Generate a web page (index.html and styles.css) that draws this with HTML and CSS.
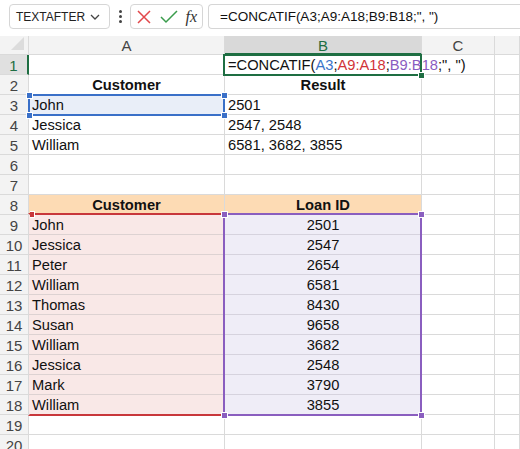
FILE: index.html
```html
<!DOCTYPE html>
<html lang="en">
<head>
  <meta charset="UTF-8">
  <title>CONCATIF</title>
  <link rel="stylesheet" href="styles.css">
</head>
<body>
  <!-- formula bar -->
  <div class="toolbar">
    <div class="name-box">
      <span>TEXTAFTER</span>
      <svg class="chev" width="12" height="8" viewBox="0 0 12 8"><path d="M2 2 L6 6 L10 2" fill="none" stroke="#444" stroke-width="1.3"/></svg>
    </div>
    <div class="dots"><i></i><i></i><i></i></div>
    <div class="fx-box">
      <svg width="16" height="16" viewBox="0 0 16 16"><path d="M2 2 L14 14 M14 2 L2 14" stroke="#e2484b" stroke-width="1.5" fill="none"/></svg>
      <svg width="18" height="16" viewBox="0 0 18 16"><path d="M1 8 L6 13 L17 2" stroke="#3a9c4c" stroke-width="1.5" fill="none"/></svg>
      <span class="fx">fx</span>
    </div>
    <div class="formula">=CONCATIF(A3;A9:A18;B9:B18;", ")</div>
  </div>

  <!-- sheet -->
  <div class="sheet">
    <div class="corner"></div>
    <div class="col-head">A</div>
    <div class="col-head sel">B</div>
    <div class="col-head">C</div>
    <div class="col-head"></div>

    <div class="row-head sel">1</div>
    <div class="cell"></div>
    <div class="cell formula-cell">=CONCATIF(<span class="r-blue">A3</span>;<span class="r-red">A9:A18</span>;<span class="r-purple">B9:B18</span>;", ")</div>
    <div class="cell"></div><div class="cell"></div>

    <div class="row-head">2</div>
    <div class="cell head">Customer</div>
    <div class="cell head">Result</div>
    <div class="cell"></div><div class="cell"></div>

    <div class="row-head">3</div>
    <div class="cell picked">John</div>
    <div class="cell">2501</div>
    <div class="cell"></div><div class="cell"></div>

    <div class="row-head">4</div>
    <div class="cell">Jessica</div>
    <div class="cell">2547, 2548</div>
    <div class="cell"></div><div class="cell"></div>

    <div class="row-head">5</div>
    <div class="cell">William</div>
    <div class="cell">6581, 3682, 3855</div>
    <div class="cell"></div><div class="cell"></div>

    <div class="row-head">6</div>
    <div class="cell"></div><div class="cell"></div><div class="cell"></div><div class="cell"></div>

    <div class="row-head">7</div>
    <div class="cell"></div><div class="cell"></div><div class="cell"></div><div class="cell"></div>

    <div class="row-head">8</div>
    <div class="cell head peach">Customer</div>
    <div class="cell head peach">Loan ID</div>
    <div class="cell"></div><div class="cell"></div>

    <div class="row-head">9</div><div class="cell pink">John</div><div class="cell lav">2501</div><div class="cell"></div><div class="cell"></div>
    <div class="row-head">10</div><div class="cell pink">Jessica</div><div class="cell lav">2547</div><div class="cell"></div><div class="cell"></div>
    <div class="row-head">11</div><div class="cell pink">Peter</div><div class="cell lav">2654</div><div class="cell"></div><div class="cell"></div>
    <div class="row-head">12</div><div class="cell pink">William</div><div class="cell lav">6581</div><div class="cell"></div><div class="cell"></div>
    <div class="row-head">13</div><div class="cell pink">Thomas</div><div class="cell lav">8430</div><div class="cell"></div><div class="cell"></div>
    <div class="row-head">14</div><div class="cell pink">Susan</div><div class="cell lav">9658</div><div class="cell"></div><div class="cell"></div>
    <div class="row-head">15</div><div class="cell pink">William</div><div class="cell lav">3682</div><div class="cell"></div><div class="cell"></div>
    <div class="row-head">16</div><div class="cell pink">Jessica</div><div class="cell lav">2548</div><div class="cell"></div><div class="cell"></div>
    <div class="row-head">17</div><div class="cell pink">Mark</div><div class="cell lav">3790</div><div class="cell"></div><div class="cell"></div>
    <div class="row-head">18</div><div class="cell pink">William</div><div class="cell lav">3855</div><div class="cell"></div><div class="cell"></div>

    <div class="row-head">19</div>
    <div class="cell"></div><div class="cell"></div><div class="cell"></div><div class="cell"></div>
    <div class="row-head">20</div>
    <div class="cell"></div><div class="cell"></div><div class="cell"></div><div class="cell"></div>

    <!-- range outlines -->
    <div class="range range-blue"><i class="h tl"></i><i class="h tr"></i><i class="h bl"></i><i class="h br"></i></div>
    <div class="range range-red"><i class="h tl"></i></div>
    <div class="range range-purple"><i class="h tl"></i><i class="h tr"></i><i class="h bl"></i><i class="h br"></i></div>
    <div class="active"><i class="fill-handle"></i></div>
  </div>
</body>
</html>
```

FILE: styles.css
```css
* {margin:0; padding:0; box-sizing:border-box;}
body {
  width:520px; height:449px; overflow:hidden; background:#fff;
  font-family:"Liberation Sans", Arial, sans-serif; color:#111;
}

/* formula bar */
.toolbar {
  height:36px; display:flex; align-items:flex-start; padding:4px 0 0 9px;
}
.name-box {
  width:101px; height:25px; border:1px solid #d6d6d6; border-radius:4px;
  display:flex; align-items:center; justify-content:space-between; padding:0 8px 0 6px;
  font-size:12px; color:#222;
}
.dots {
  width:20px; height:25px; display:flex; flex-direction:column; align-items:center; justify-content:center; gap:2px;
}
.dots i {width:3px; height:3px; background:#444; border-radius:50%; display:block;}
.fx-box {
  width:73px; height:25px; border:1px solid #d6d6d6; border-radius:4px;
  display:flex; align-items:center; justify-content:space-between; padding:0 5px 0 5px;
}
.fx {font-family:"Liberation Serif", serif; font-style:italic; font-size:16px; color:#333;}
.formula {
  margin-left:5px; flex:1; height:25px; border:1px solid #d6d6d6; border-right:none; border-radius:4px 0 0 4px;
  padding:0 0 0 11px; display:flex; align-items:center; font-size:13.5px; white-space:nowrap;
}

/* grid */
.sheet {
  position:relative; display:grid;
  grid-template-columns:29px 196px 197px 73px 1fr;
  grid-template-rows:19px repeat(20, 20px);
  font-size:14.7px;
}
.sheet > div:not(.range):not(.active) {
  border-right:1px solid #dadada; border-bottom:1px solid #dadada;
  white-space:nowrap; overflow:hidden;
}
.corner {background:#f3f3f3; position:relative;}
.corner::after {
  content:""; position:absolute; right:4px; bottom:4px;
  border-left:13px solid transparent; border-bottom:13px solid #dcdcdc;
}
.col-head {
  background:#f3f3f3; text-align:center; line-height:20px; color:#444; font-size:15px;
}
.col-head.sel {background:#d9d9d9; color:#1e6e42; border-bottom:2px solid #1e6e42 !important;}
.row-head {
  background:#f3f3f3; text-align:center; line-height:21px; color:#444; font-size:15px;
}
.row-head.sel {background:#e0e0e0; color:#1e6e42; border-right:2px solid #1e6e42 !important;}
.cell {padding:0 3px; line-height:21px;}
.head {font-weight:bold; text-align:center;}
.formula-cell {overflow:visible !important; padding-left:3px;}
.r-blue {color:#3b74c9;}
.r-red {color:#d13438;}
.r-purple {color:#8a5cc1;}
.picked {background:#e9eef8;}
.peach {background:#fddbb4;}
.pink {background:#f9e8e7; border-bottom-color:#ddd2d2 !important;}
.lav {background:#efedf7; text-align:center; border-bottom-color:#d6d3de !important;}

/* outlines laid over the cells */
.range, .active {position:absolute; pointer-events:none;}
.range-blue {left:28px; top:58px; width:197px; height:22px; border:2px solid #3a70c8;}
.range-red {left:28px; top:177px; width:197px; height:203px; border:2px solid #c8373b; border-left-color:transparent;}
.range-purple {left:223px; top:177px; width:199px; height:203px; border:2px solid #8a5ebf;}
.active {left:223px; top:18px; width:199px; height:22px; border:2px solid #1e6e42;}
.h {position:absolute; width:7px; height:7px; border:1px solid #fff; display:block;}
.range-blue .h {background:#3a70c8;}
.range-red .h {background:#c8373b; width:5px; height:7px; border-left:none;}
.range-purple .h {background:#8a5ebf;}
.tl {left:-4px; top:-4px;}
.tr {right:-5px; top:-4px;}
.bl {left:-4px; bottom:-5px;}
.br {right:-5px; bottom:-5px;}
.range-red .tl {left:0;}
.fill-handle {
  position:absolute; right:-5px; bottom:-5px; width:7px; height:7px;
  background:#1e6e42; border:1px solid #fff; display:block;
}
```
